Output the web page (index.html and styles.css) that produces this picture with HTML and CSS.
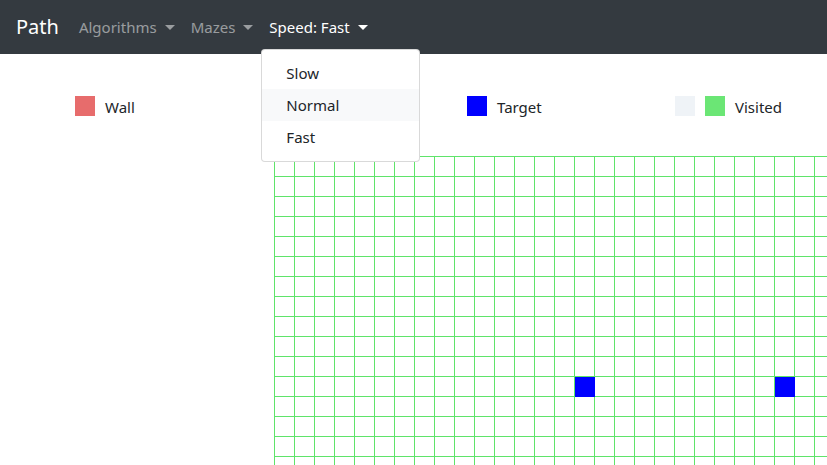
FILE: index.html
```html
<!DOCTYPE html>
<html lang="en">
<head>
<meta charset="utf-8">
<title>Path</title>
<link rel="stylesheet" href="styles.css">
</head>
<body>
<nav class="navbar">
  <span class="brand">Path</span>
  <ul class="nav">
    <li class="nav-item"><span class="nav-link muted">Algorithms<i class="caret"></i></span></li>
    <li class="nav-item"><span class="nav-link muted">Mazes<i class="caret"></i></span></li>
    <li class="nav-item open">
      <span class="nav-link active">Speed: Fast<i class="caret"></i></span>
      <div class="menu">
        <div class="menu-item">Slow</div>
        <div class="menu-item hover">Normal</div>
        <div class="menu-item">Fast</div>
      </div>
    </li>
  </ul>
</nav>
<main class="main">
  <div class="legend">
    <div class="legend-item"><span class="swatch wall"></span><span class="label">Wall</span></div>
    <div class="legend-item"><span class="swatch start"></span></div>
    <div class="legend-item"><span class="swatch target"></span><span class="label">Target</span></div>
    <div class="legend-item"><span class="swatch unvisited"></span><span class="swatch visited"></span><span class="label">Visited</span></div>
  </div>
  <div class="board">
    <div class="grid" id="grid"></div>
  </div>
</main>
<script src="grid.js"></script>
</body>
</html>
```
FILE: styles.css
```css
* { box-sizing: border-box; }
html, body { margin: 0; padding: 0; }
body {
  font-family: "Noto Sans", "Open Sans", sans-serif;
  font-size: 16px;
  color: #212529;
  background: #fff;
  overflow: hidden;
  width: 827px;
  height: 465px;
}
.navbar {
  display: flex;
  align-items: center;
  height: 54px;
  padding: 0 16px;
  background: #343a40;
}
.brand {
  color: #fff;
  font-size: 20px;
  line-height: 30px;
  margin-right: 12px;
}
.nav {
  display: flex;
  list-style: none;
  margin: 0;
  padding: 0;
}
.nav-item { position: relative; }
.nav-link {
  display: block;
  padding: 8px;
  line-height: 24px;
  font-size: 15px;
}
.muted { color: rgba(255,255,255,.5); }
.active { color: #fff; }
.caret {
  display: inline-block;
  margin-left: 8px;
  vertical-align: 3px;
  border-top: 5px solid;
  border-left: 5px solid transparent;
  border-right: 5px solid transparent;
}
.menu {
  position: absolute;
  top: calc(100% + 2px);
  left: 0;
  width: 159px;
  padding: 7px 0 8px;
  background: #fff;
  border: 1px solid rgba(0,0,0,.15);
  border-radius: 4px;
  z-index: 10;
}
.menu-item {
  padding: 4px 24px;
  line-height: 24px;
  font-size: 15px;
  color: #212529;
}
.menu-item.hover { background: #f8f9fa; }
.main { padding-top: 40px; }
.legend {
  display: grid;
  grid-template-columns: 196px 196px 208px auto;
  padding-left: 75px;
  height: 20px;
}
.legend-item {
  display: flex;
  align-items: center;
  gap: 10px;
  font-size: 15px;
  line-height: 20px;
}
.label { padding-top: 3px; }
.swatch { width: 20px; height: 20px; flex: none; }
.wall { background: #e76c6c; }
.start { background: #ffb347; }
.target { background: #0000ff; }
.unvisited { background: #eff3f7; }
.visited { background: #6be675; }
.board {
  margin-top: 42px;
  margin-left: 274px;
}
.grid {
  display: grid;
  grid-template-columns: repeat(30, 20px);
  grid-auto-rows: 20px;
  width: max-content;
  border-left: 1px solid #5fe46a;
  border-top: 1px solid #5fe46a;
}
.cell {
  border-right: 1px solid #5fe46a;
  border-bottom: 1px solid #5fe46a;
}
.cell.goal {
  background: #0000ff;
  border-color: #0000ff;
}
```
FILE: grid.js
```js
(function () {
  var grid = document.getElementById('grid');
  var rows = 16, cols = 30;
  var goals = { '11-15': true, '11-25': true };
  for (var r = 0; r < rows; r++) {
    for (var c = 0; c < cols; c++) {
      var d = document.createElement('div');
      d.className = 'cell' + (goals[r + '-' + c] ? ' goal' : '');
      grid.appendChild(d);
    }
  }
})();
```
